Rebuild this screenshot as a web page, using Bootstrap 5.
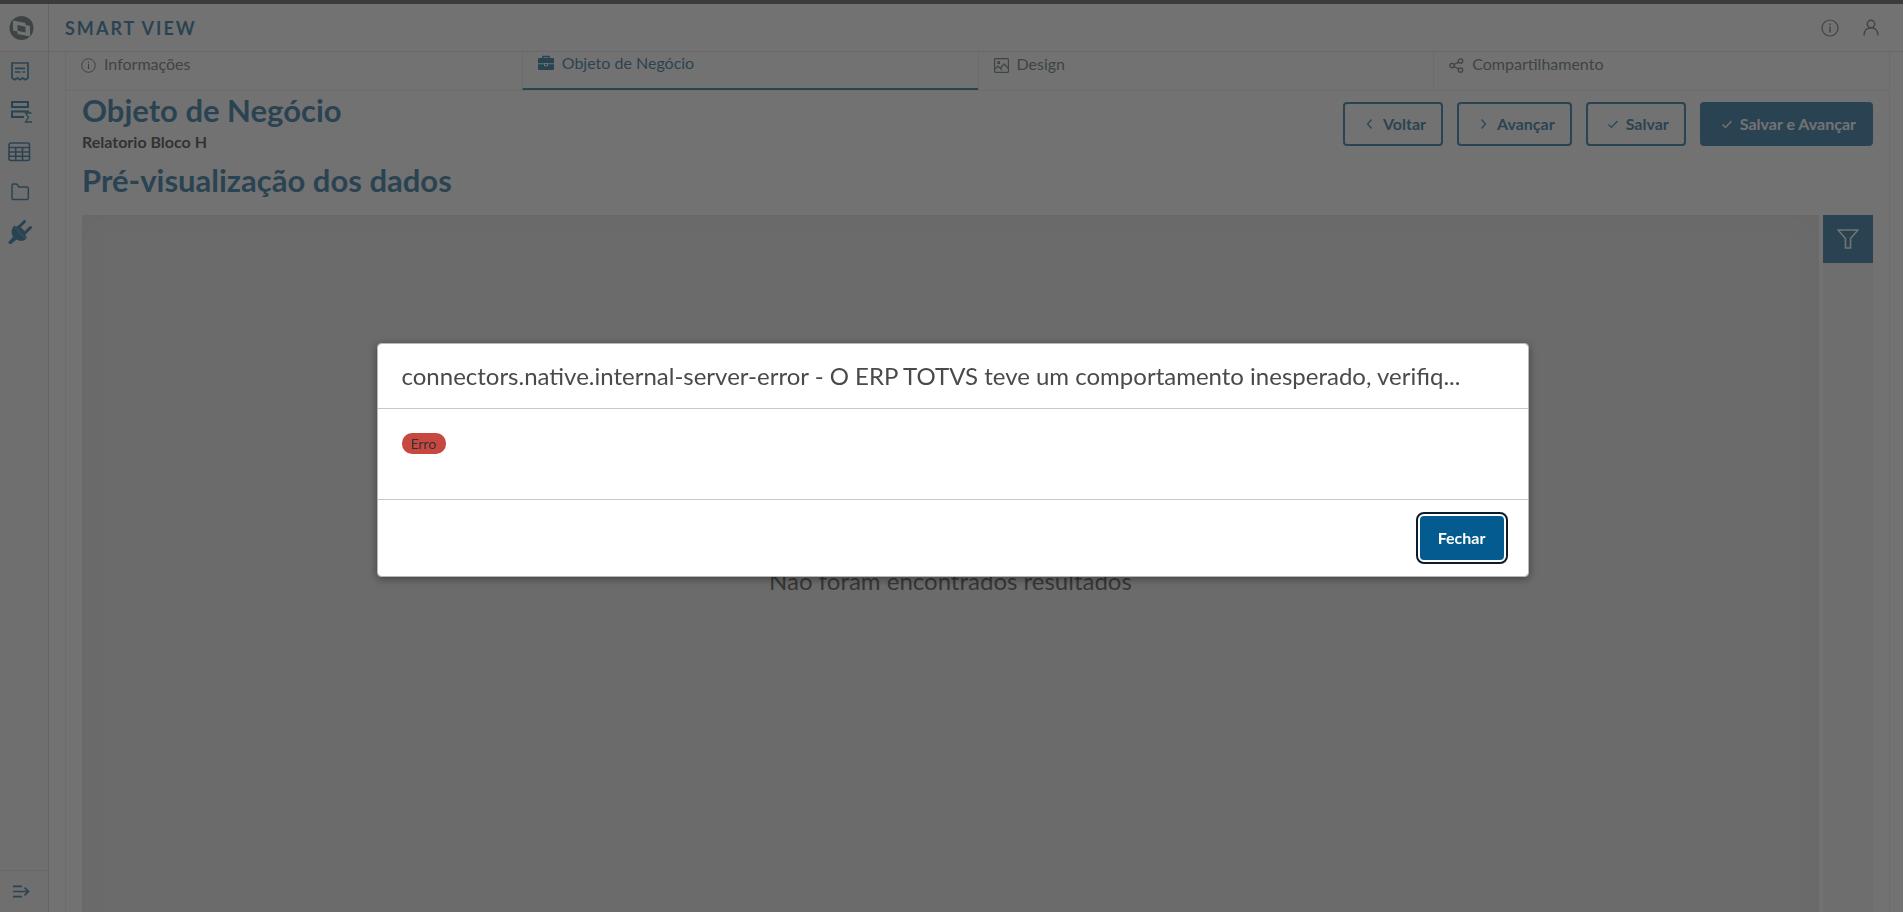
<!DOCTYPE html>
<html lang="pt-BR">
<head>
<meta charset="utf-8">
<meta name="viewport" content="width=device-width, initial-scale=1">
<title>Smart View</title>
<link href="https://cdn.jsdelivr.net/npm/bootstrap@5.3.0/dist/css/bootstrap.min.css" rel="stylesheet">
<style>
:root { --brand: #045b8f; --ink: #4a5c60; --line: #dadada; --soft: #ebebeb; }
body { font-family: Lato, "Open Sans", sans-serif; color: var(--ink); font-size: 16px; line-height: 24px; }
svg { display: block; flex: none; }
.shell { height: 100vh; overflow: hidden; border-top: 4px solid #424242; }
.topbar { height: 48px; flex: none; border-bottom: 1px solid var(--line); }
.brandmark { width: 49px; height: 47px; border-right: 1px solid #cfcfcf; }
.product { color: var(--brand); font-size: 18px; font-weight: 700; letter-spacing: 2px; }
.product:not(:hover) { text-decoration: none; }
.sidebar { width: 49px; background: #f4f4f4; border-right: 1px solid #cfcfcf; flex: none; }
.sidebar a { color: var(--brand); height: 40px; padding-left: 8px; }
.sidebar a svg { width: 24px; }
.sidebar .expand { height: 42px; border-top: 1px solid var(--line); }
.page-area { margin: 0 13px 0 16px; border: solid #e8e8e8; border-width: 0 1px; }
.steps { border-bottom: 1px solid var(--soft); }
.steps a { height: 38px; padding: 0 15px; color: var(--ink); border-left: 1px solid var(--soft); gap: 8px; }
.steps li:first-child a { border-left: 0; }
.steps a span { line-height: 24px; }
.steps a svg { margin-top: 6px; }
.steps a.active { color: var(--brand); border-bottom: 2px solid var(--brand); }
.steps a.active span { line-height: 22px; }
.steps a.active svg { margin-top: 3px; }
.content-pad { padding: 0 16px; }
.headline { color: var(--brand); font-size: 31px; line-height: 38px; font-weight: 700; margin: 0; }
.headline + .report-name { line-height: 26px; }
.report-name { color: #1c1c1c; font-weight: 700; }
.section-title { margin-top: 6px; }
.action-bar { gap: 14px; padding-top: 11px; }
.btn { height: 44px; border-radius: 4px; font-weight: 700; padding: 0 15px 0 16px; border-width: 2px; --bs-btn-color: var(--brand); --bs-btn-border-color: var(--brand); }
.btn-solid { --bs-btn-color: #fff; --bs-btn-bg: var(--brand); }
.preview { min-height: calc(100vh - 180px); margin-top: 16px; }
.canvas-area { background: #e6e6e6; box-shadow: inset 0 0 28px #d9d9d9; color: #303030; font-size: 24px; }
.filter-rail { width: 50px; background: #efefef; }
.btn-filter { height: 48px; width: 50px; background: var(--brand); color: #fff; border: 0; }
.modal-backdrop { --bs-backdrop-bg: #393939; --bs-backdrop-opacity: .713; }
.modal { padding-left: 2px; }
.modal-dialog { --bs-modal-width: 1152px; --bs-modal-border-radius: 4px; --bs-modal-border-color: #b8b8b8; padding-top: 8px; }
.modal-content { box-shadow: 0 2px 8px rgba(0,0,0,.4); }
.modal-header { padding: 0 50px 0 24px; height: 65px; border-bottom: 1px solid #c4c8c9; }
.modal-title { font-size: 24px; line-height: 32px; color: #4a4a4a; font-weight: 400; }
.modal-body { padding: 24px; height: 90px; }
.modal-footer { padding: 16px 24px; height: 77px; border-top: 1px solid #c4c8c9; }
.modal-footer > .btn { margin: 0; padding: 0; width: 84px; outline: 2px solid #0b1d2c; outline-offset: 2px; }
.tag { display: block; width: 44px; height: 21px; background: #c64840; color: #333; font-size: 14px; line-height: 21px; border-radius: 10px; text-align: center; }
</style>
</head>
<body class="modal-open overflow-hidden">
<div class="shell d-flex flex-column">
  <header class="topbar d-flex align-items-center">
    <div class="brandmark d-flex align-items-center">
      <svg class="ms-2" width="28" height="26" viewBox="0 0 28 26"><circle cx="13.500" cy="13" r="12" fill="#4a5c60"/><path fill="#fff" d="M5 5.500 17.500 8v2l4.500 1v10.500L9.500 19v-2.500L5 15.500z"/><path fill="#4a5c60" d="m9.500 10 8 1.800v5.800l-8-1.800z"/></svg>
    </div>
    <a href="#" class="product ps-3">SMART VIEW</a>
    <div class="d-flex align-items-center gap-4 ms-auto me-4">
      <a href="#" class="text-reset" aria-label="Informações"><svg width="18" height="18" viewBox="0 0 18 18" fill="none" stroke="currentColor" stroke-width="1.200"><circle cx="9" cy="9" r="8"/><path d="M9 7.500V13.500M9 4.500v1.500" stroke-width="1.400"/></svg></a>
      <a href="#" class="text-reset" aria-label="Perfil"><svg width="16" height="18" viewBox="0 0 16 18" fill="none" stroke="currentColor" stroke-width="1.400"><circle cx="8" cy="5" r="3.700"/><path d="M1 16.500c0-5 3-7.800 7-7.800s7 2.800 7 7.800"/></svg></a>
    </div>
  </header>
  <div class="d-flex flex-grow-1 overflow-hidden">
    <nav class="sidebar d-flex flex-column" aria-label="Menu">
      <a href="#" class="d-flex align-items-center" aria-label="Relatórios"><svg height="22" viewBox="0 0 24 22" fill="none" stroke="currentColor" stroke-width="1.700"><path d="M4 17V2h16v15l-2.700 1.800L14.600 17 12 18.800 9.300 17l-2.700 1.800zM7 7.300h10M7 11h5.500M14.500 11H17"/></svg></a>
      <a href="#" class="d-flex align-items-center" aria-label="Visões"><svg height="24" viewBox="0 0 24 24" fill="none" stroke="currentColor" stroke-width="2"><path d="M4 2h16v5H4zM21 11.500H4V17h12"/><path d="M23.500 13h-6l3 4.500-3 4.500h6.500" stroke-width="1.300"/></svg></a>
      <a href="#" class="d-flex align-items-center" aria-label="Tabelas"><svg height="20" viewBox="0 0 24 20" fill="none" stroke="currentColor" stroke-width="1.600"><rect x="1" y="1" width="20.500" height="17.500" rx="2"/><path d="M1 5.500h20M1 10h20M1 14.200h20M7.700 5v13.500M14.500 5v13.500"/></svg></a>
      <a href="#" class="d-flex align-items-center" aria-label="Pastas"><svg height="18" viewBox="0 0 24 18" fill="none" stroke="currentColor" stroke-width="1.500"><path d="M4 15V2.500Q4 1 5.500 1H8q1 0 1.500 1l1.300 2h8q1.500 0 1.500 1.500V15q0 1.500-1.500 1.500H5.500Q4 16.500 4 15z"/></svg></a>
      <a href="#" class="d-flex align-items-center" aria-label="Conectores"><svg height="24" viewBox="0 0 24 24" fill="currentColor"><path d="M5.500 6.500 18 19c-3 2.500-6.500 2.500-9.500.5L2.500 24.500 0 22.500 5 17C3 13.500 3.200 9.500 5.500 6.500z"/><path d="M8 6.500 18 16.500q1.500 1.500 0 2.500L5.500 6.500q1-1.500 2.500 0z"/><path d="m11.500 6.500 5-5M17.500 12.500l5-5" stroke="currentColor" stroke-width="3" stroke-linecap="round"/><path d="m8 6.500 3-1 7 7-.5 4z"/></svg></a>
      <a href="#" class="expand d-flex align-items-center mt-auto" aria-label="Expandir menu"><svg height="13" viewBox="0 0 24 13" fill="none" stroke="currentColor" stroke-width="1.700"><path d="M5 1.300h9M5 6.500h15M5 11.700h9M16.500 2.700l4 3.800-4 3.800"/></svg></a>
    </nav>
    <main class="page-area flex-grow-1">
      <ul class="steps nav nav-fill">
        <li class="nav-item w-25 flex-grow-0"><a href="#" class="d-flex text-decoration-none"><svg width="15" height="15" viewBox="0 0 15 15" fill="none" stroke="currentColor"><circle cx="7.500" cy="7.500" r="6.800"/><path d="M7.500 6v5M7.500 3.700v1.300"/></svg><span>Informações</span></a></li>
        <li class="nav-item w-25 flex-grow-0"><a href="#" class="active d-flex text-decoration-none" aria-current="step"><svg width="16" height="16" viewBox="0 0 16 16"><path d="M5 4V1.500h6V4" fill="none" stroke="currentColor" stroke-width="1.500"/><path fill="currentColor" d="M1 3h14q1 0 1 1v4.200H10V8H6v.200H0V4q0-1 1-1zM0 9.200h6v2h4v-2h6V14q0 1-1 1H1q-1 0-1-1zM7 9h2v1.300H7z"/></svg><span>Objeto de Negócio</span></a></li>
        <li class="nav-item w-25 flex-grow-0"><a href="#" class="d-flex text-decoration-none"><svg width="15" height="15" viewBox="0 0 15 15" fill="none" stroke="currentColor" stroke-width="1.200"><rect x=".6" y=".6" width="13.800" height="13.800" rx="1"/><circle cx="4.700" cy="4.700" r="1"/><path d="m1 11 3-3 4 4M6.500 10l3.500-4 4.500 4.500"/></svg><span>Design</span></a></li>
        <li class="nav-item w-25 flex-grow-0"><a href="#" class="d-flex text-decoration-none"><svg width="15" height="15" viewBox="0 0 15 15" fill="none" stroke="currentColor" stroke-width="1.300"><circle cx="3" cy="7.500" r="2.200"/><circle cx="11.500" cy="3" r="2.200"/><circle cx="11.500" cy="12" r="2.200"/><path d="m5 6.500 4.500-2.400M5 8.500l4.500 2.400"/></svg><span>Compartilhamento</span></a></li>
      </ul>
      <div class="content-pad">
        <div class="d-flex justify-content-between">
          <div>
            <h1 class="headline">Objeto de Negócio</h1>
            <div class="report-name">Relatorio Bloco H</div>
          </div>
          <div class="action-bar d-flex">
            <button type="button" class="btn d-flex align-items-center gap-2"><svg class="ms-1" width="10" height="10" viewBox="0 0 10 10" fill="none" stroke="currentColor" stroke-width="1.200"><path d="M6.500 .5 2.500 5l4 4.500"/></svg>Voltar</button>
            <button type="button" class="btn d-flex align-items-center gap-2"><svg class="ms-1" width="10" height="10" viewBox="0 0 10 10" fill="none" stroke="currentColor" stroke-width="1.200"><path d="m2.500 .5 4 4.500-4 4.500"/></svg>Avançar</button>
            <button type="button" class="btn d-flex align-items-center gap-2"><svg class="ms-1" width="10" height="10" viewBox="0 0 10 10" fill="none" stroke="currentColor" stroke-width="1.200"><path d="m.5 5.500 3 3 6-6.500"/></svg>Salvar</button>
            <button type="button" class="btn btn-solid d-flex align-items-center gap-2"><svg class="ms-1" width="10" height="10" viewBox="0 0 10 10" fill="none" stroke="currentColor" stroke-width="1.500"><path d="m.5 5.500 3 3 6-6.500"/></svg>Salvar e Avançar</button>
          </div>
        </div>
        <h2 class="headline section-title">Pré-visualização dos dados</h2>
        <div class="preview d-flex gap-1">
          <div class="canvas-area flex-grow-1 d-flex align-items-center justify-content-center">Não foram encontrados resultados</div>
          <div class="filter-rail">
            <button type="button" class="btn-filter d-flex align-items-center justify-content-center" aria-label="Filtrar"><svg width="22" height="20" viewBox="0 0 22 20" fill="none" stroke="currentColor" stroke-width="1.600"><path d="M1 1h20l-7.500 8.500V19h-5V9.500z"/></svg></button>
          </div>
        </div>
      </div>
    </main>
  </div>
</div>
<div class="modal-backdrop show"></div>
<div class="modal show d-block" role="dialog" aria-modal="true" aria-labelledby="dialogTitle">
  <div class="modal-dialog modal-dialog-centered">
    <div class="modal-content">
      <div class="modal-header"><h2 class="modal-title text-nowrap" id="dialogTitle">connectors.native.internal-server-error - O ERP TOTVS teve um comportamento inesperado, verifiq...</h2></div>
      <div class="modal-body"><span class="tag">Erro</span></div>
      <div class="modal-footer"><button type="button" class="btn btn-solid">Fechar</button></div>
    </div>
  </div>
</div>
<script src="https://cdn.jsdelivr.net/npm/bootstrap@5.3.0/dist/js/bootstrap.bundle.min.js"></script>
</body>
</html>
